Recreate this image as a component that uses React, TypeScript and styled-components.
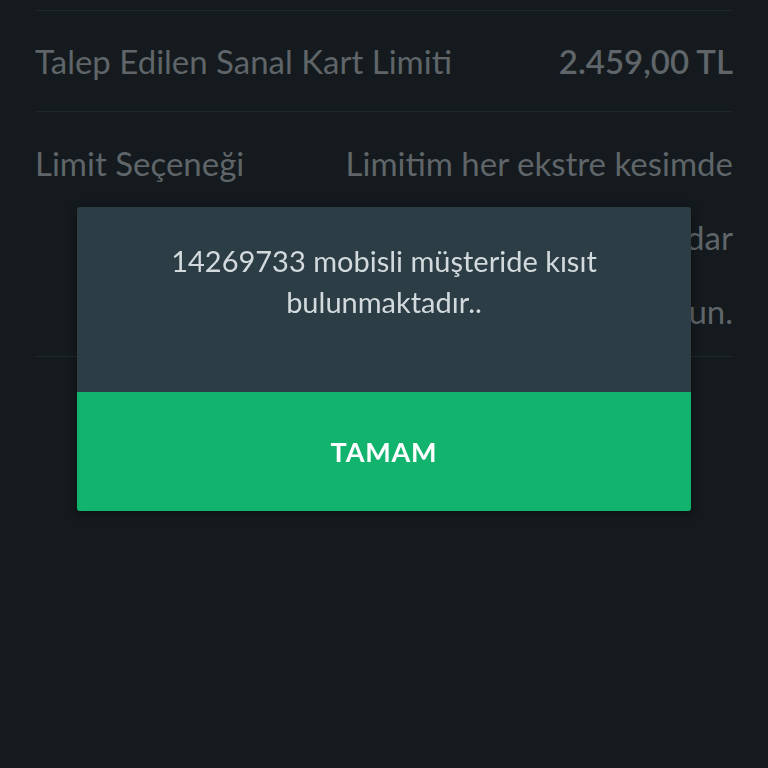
import React from "react";
import styled, { createGlobalStyle } from "styled-components";

const GlobalStyle = createGlobalStyle`
  html, body {
    margin: 0;
    padding: 0;
    background: #141a1d;
  }
  body {
    font-family: Lato, "Open Sans", sans-serif;
  }
`;

interface DetailRow {
  label: string;
  value: string[];
  strong?: boolean;
}

const rows: DetailRow[] = [
  { label: "Talep Edilen Sanal Kart Limiti", value: ["2.459,00 TL"], strong: true },
  {
    label: "Limit Seçeneği",
    value: ["Limitim her ekstre kesimde", "ödenen tutar kadar", "güncellensin, sabit olsun."],
  },
];

const App: React.FC = () => {
  return (
    <>
      <GlobalStyle />
      <Screen>
        <DetailList>
          {rows.map((row) => (
            <Row key={row.label} multiline={row.value.length > 1}>
              <Label>{row.label}</Label>
              <Value strong={row.strong}>
                {row.value.map((line) => (
                  <span key={line}>{line}</span>
                ))}
              </Value>
            </Row>
          ))}
        </DetailList>
      </Screen>
      <Overlay>
        <Dialog>
          <Message>
            14269733 mobisli müşteride kısıt
            <br />
            bulunmaktadır..
          </Message>
          <ConfirmButton type="button">TAMAM</ConfirmButton>
        </Dialog>
      </Overlay>
    </>
  );
};

export default App;

const Screen = styled.div`
  width: 768px;
  height: 768px;
  box-sizing: border-box;
  padding: 10px 35px 0;
  background: #141a1d;
  overflow: hidden;
`;

const DetailList = styled.ul`
  list-style: none;
  margin: 0;
  padding: 0;
  border-top: 1px solid #1f272b;
`;

const Row = styled.li<{ multiline?: boolean }>`
  display: flex;
  justify-content: space-between;
  align-items: ${({ multiline }) => (multiline ? "flex-start" : "center")};
  height: ${({ multiline }) => (multiline ? "auto" : "100px")};
  padding: ${({ multiline }) => (multiline ? "14px 0 8px" : "0")};
  border-bottom: 1px solid #1f272b;
  color: #5f6569;
  font-size: 33px;
  line-height: 74px;
`;

const Label = styled.span`
  font-weight: 400;
  white-space: nowrap;
`;

const Value = styled.div<{ strong?: boolean }>`
  display: flex;
  flex-direction: column;
  align-items: flex-end;
  font-weight: ${({ strong }) => (strong ? 600 : 400)};
  white-space: nowrap;
`;

const Overlay = styled.div`
  position: fixed;
  inset: 0;
  display: flex;
  justify-content: center;
  align-items: flex-start;
  padding-top: 207px;
`;

const Dialog = styled.div`
  width: 614px;
  border-radius: 3px;
  overflow: hidden;
  background: #2c3d46;
  box-shadow: 0 2px 8px rgba(0, 0, 0, 0.4);
`;

const Message = styled.p`
  margin: 0;
  height: 185px;
  box-sizing: border-box;
  padding-top: 33px;
  color: #d3dadd;
  font-size: 29px;
  line-height: 41px;
  text-align: center;
`;

const ConfirmButton = styled.button`
  display: block;
  width: 100%;
  height: 119px;
  border: 0;
  background: #11b36d;
  color: #ffffff;
  font-family: Lato, "Open Sans", sans-serif;
  font-size: 27px;
  font-weight: 700;
  letter-spacing: 0.8px;
  cursor: pointer;
`;
